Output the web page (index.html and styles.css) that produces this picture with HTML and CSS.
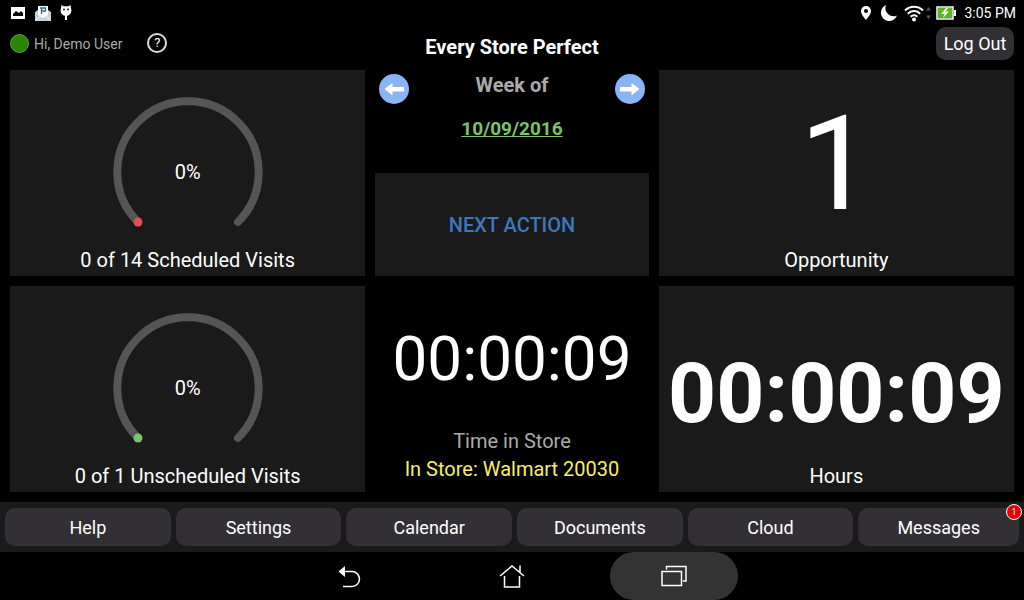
FILE: index.html
```html
<!DOCTYPE html>
<html lang="en">

<head>
  <meta charset="UTF-8">
  <meta name="viewport" content="width=device-width, initial-scale=1">
  <title>Every Store Perfect</title>
  <link rel="stylesheet" href="styles.css">
</head>

<body>
  <div class="status">
    <div class="status-group notices">
      <svg width="16" height="14" viewBox="0 0 16 14"><path fill="#fff" fill-rule="evenodd" d="M1 1h14v12H1zM3 10h10V7l-2-2-2 2-3-2-3 3z"/></svg>
      <svg width="16" height="16" viewBox="0 0 16 16"><path fill="#c9d2d6" d="M0 7l3-2h10l3 2v9H0z"/><path fill="#fff" d="M3 1h10v9l-5 3-5-3z"/><path d="M6.500 9V3h4v3h-4M5 3h3" fill="none" stroke="#356c8e" stroke-width="1.300"/><path d="M0 15l6-4h4l6 4" fill="none" stroke="#f4f7f8"/></svg>
      <svg width="12" height="16" viewBox="0 0 12 16"><path fill="#fff" d="M1.500 0l2 1.300h5L10.500 0l.6 3.500c1 4-1 6.800-4.100 7.200V15H5v-4.300C1.900 10.300-.1 7.500.9 3.500z"/><circle cx="4" cy="4.500" r=".9"/><circle cx="8" cy="4.500" r=".9"/></svg>
    </div>
    <div class="status-group">
      <svg width="12" height="16" viewBox="0 0 12 16"><path fill="#fff" fill-rule="evenodd" d="M6 1a5 5 0 0 0-5 5c0 3.500 5 9 5 9s5-5.500 5-9a5 5 0 0 0-5-5zm0 3a2 2 0 1 1 0 4 2 2 0 0 1 0-4z"/></svg>
      <svg class="moon" width="18" height="16" viewBox="0 0 18 16"><path fill="#fff" d="M6 0a8.300 8.300 0 1 0 11 10.500A8.200 8.200 0 0 1 6 0z"/></svg>
      <svg width="28" height="18" viewBox="0 0 28 18"><g fill="none" stroke="#fff" stroke-width="2"><path d="M1 6.500c5-5 13-5 18 0M3.800 9.700c3.500-3.500 8.900-3.500 12.400 0M6.600 12.800c2-1.900 4.800-1.900 6.800 0"/></g><circle cx="10" cy="15.500" r="2" fill="#fff"/><path fill="#555" d="M22 6.500l2.500-3.500L27 6.500zM22 11.500l2.500 3.500 2.500-3.500z"/></svg>
      <svg class="battery" width="20" height="14" viewBox="0 0 20 14"><path d="M1 1h16v12H1z" fill="#222" stroke="#fff" stroke-width="1.500"/><path fill="#58b51c" d="M2 2h14v10H2z"/><path fill="#fff" d="M18 4h2v6h-2zM10 2L5 8h3.500L7 12l6-6.500H9.500L12 2z"/></svg>
      <span class="clock">3:05 PM</span>
    </div>
  </div>

  <header class="header">
    <div class="user">
      <span class="online"></span>
      <span class="user-name">Hi, Demo User</span>
      <button class="help" aria-label="About">?</button>
    </div>
    <h1>Every Store Perfect</h1>
    <button class="logout">Log Out</button>
  </header>

  <main class="board">
    <section class="tile">
      <div class="gauge">
        <svg width="150" height="140" viewBox="0 0 150 140"><path class="track" d="M25 124a70.700 70.700 0 1 1 100 0"/><circle cx="25" cy="124" r="4.500" fill="#e2504f"/></svg>
        <span class="percent">0%</span>
      </div>
      <div class="label">0 of 14 Scheduled Visits</div>
    </section>

    <section class="center">
      <div class="week">
        <button class="arrow" aria-label="Previous week">
          <svg width="30" height="30" viewBox="0 0 30 30"><circle cx="15" cy="15" r="15" fill="#8ab4f3"/><path fill="#fff" d="M5.500 15l8-6v4H25v4.500H13.500v4z"/></svg>
        </button>
        <div class="week-text">
          <div>Week of</div>
          <a href="#">10/09/2016</a>
        </div>
        <button class="arrow" aria-label="Next week">
          <svg width="30" height="30" viewBox="0 0 30 30"><circle cx="15" cy="15" r="15" fill="#8ab4f3"/><path fill="#fff" d="M24.500 15l-8-6v4H5v4.500h11.500v4z"/></svg>
        </button>
      </div>
      <button class="next">NEXT ACTION</button>
    </section>

    <section class="tile">
      <div class="count">1</div>
      <div class="label">Opportunity</div>
    </section>

    <section class="tile">
      <div class="gauge">
        <svg width="150" height="140" viewBox="0 0 150 140"><path class="track" d="M25 124a70.700 70.700 0 1 1 100 0"/><circle cx="25" cy="124" r="4.500" fill="#7cc36c"/></svg>
        <span class="percent">0%</span>
      </div>
      <div class="label">0 of 1 Unscheduled Visits</div>
    </section>

    <section class="store">
      <div class="timer">00:00:09</div>
      <div class="store-label">Time in Store</div>
      <div class="store-name">In Store: Walmart 20030</div>
    </section>

    <section class="tile">
      <div class="hours">00:00:09</div>
      <div class="label">Hours</div>
    </section>
  </main>

  <nav class="tabs">
    <button>Help</button>
    <button>Settings</button>
    <button>Calendar</button>
    <button>Documents</button>
    <button>Cloud</button>
    <button>Messages<span class="badge">1</span></button>
  </nav>

  <div class="system">
    <button aria-label="Back">
      <svg width="26" height="26" viewBox="0 0 26 26"><path d="M5 8.500h10a7.500 7.500 0 0 1 0 15H6" fill="none" stroke="#fff" stroke-width="1.500"/><path fill="#fff" d="M1.500 8.500L8 3v11z"/></svg>
    </button>
    <button aria-label="Home">
      <svg width="26" height="26" viewBox="0 0 26 26"><path d="M1 13L13 3l12 10M21 9V2.500M5.500 13v11h15V13" fill="none" stroke="#fff" stroke-width="1.500"/></svg>
    </button>
    <button class="pressed" aria-label="Recent apps">
      <svg width="26" height="26" viewBox="0 0 26 26"><path d="M1 8.500h19.500v14H1zM5.500 6.500v-3h19.500v14.500h-3" fill="none" stroke="#fff" stroke-width="1.500"/></svg>
    </button>
  </div>
</body>

</html>
```
FILE: styles.css
```css
* {
  box-sizing: border-box;
}

body {
  margin: 0;
  min-height: 100vh;
  display: flex;
  flex-direction: column;
  background: #000;
  color: #fff;
  font-family: Roboto, "Liberation Sans", sans-serif;
  font-size: 20px;
}

button {
  margin: 0;
  padding: 0;
  border: none;
  background: none;
  color: inherit;
  font: inherit;
  cursor: pointer;
}

svg {
  display: block;
  overflow: visible;
}

/* android status bar */
.status {
  height: 25px;
  padding: 0 8px 0 10px;
  display: flex;
  justify-content: space-between;
}

.status-group {
  display: flex;
  align-items: center;
  gap: 8px;
}

.notices {
  gap: 9px;
}

.moon {
  margin-right: -2px;
}

.battery {
  margin-left: -4px;
}

.clock {
  font-size: 14px;
}

/* header */
.header {
  height: 45px;
  padding: 2px 10px 0;
  display: grid;
  grid-template-columns: 1fr auto 1fr;
  align-items: start;
}

.user {
  height: 32px;
  display: flex;
  align-items: center;
}

.online {
  width: 19px;
  height: 19px;
  border-radius: 50%;
  border: 1px solid #5d9e4c;
  background: #2a8500;
}

.user-name {
  margin: 2px 25px 0 5px;
  color: #aaa;
  font-size: 14px;
}

.help {
  width: 20px;
  height: 20px;
  border: 2px solid #ddd;
  border-radius: 50%;
  font-size: 13px;
  line-height: 16px;
}

h1 {
  margin: 0;
  font-size: 20px;
  line-height: 40px;
}

.logout {
  justify-self: end;
  width: 78px;
  height: 33px;
  border-radius: 10px;
  background: #323034;
  font-size: 18px;
}

/* dashboard */
.board {
  flex: 1;
  padding: 0 10px 10px;
  display: grid;
  grid-template-columns: 13fr 10fr 13fr;
  grid-template-rows: 1fr 1fr;
  gap: 10px;
}

.tile {
  display: flex;
  flex-direction: column;
  background: #1a1a1a;
  text-align: center;
}

.label {
  line-height: 32px;
}

.gauge {
  flex: 1;
  padding-top: 28px;
  display: grid;
  justify-items: center;
  align-items: start;
}

.gauge svg,
.percent {
  grid-area: 1 / 1;
}

.percent {
  padding-top: 60px;
  line-height: 28px;
}

.track {
  fill: none;
  stroke: #555;
  stroke-width: 8;
  stroke-linecap: round;
}

.count,
.hours {
  flex: 1;
}

.count {
  padding-top: 18px;
  font-size: 131px;
  line-height: 152px;
}

.hours {
  padding-top: 58px;
  font-size: 84px;
  font-weight: bold;
  line-height: 100px;
}

.center {
  display: grid;
  grid-template-rows: 1fr 1fr;
}

.week {
  padding: 0 4px;
  display: flex;
  justify-content: space-between;
  color: #aaa;
  font-weight: bold;
  line-height: 30px;
  text-align: center;
}

.arrow {
  height: 30px;
  margin-top: 4px;
}

.week-text {
  display: flex;
  flex-direction: column;
  gap: 14px;
}

.week a {
  color: #7cc36c;
  font-size: 19px;
}

.next {
  background: #1a1a1a;
  color: #3b78bf;
  font-weight: 500;
}

.store {
  display: flex;
  flex-direction: column;
  line-height: 28px;
  text-align: center;
}

.timer {
  flex: 1;
  padding-top: 37px;
  font-size: 62px;
  line-height: 72px;
}

.store-label {
  color: #aaa;
}

.store-name {
  padding-bottom: 9px;
  color: #f6ee6e;
}

/* bottom tabs */
.tabs {
  height: 50px;
  display: grid;
  grid-template-columns: repeat(6, 1fr);
  align-items: center;
  background: #1a1a1a;
}

.tabs button {
  position: relative;
  height: 38px;
  margin-left: 5px;
  border-radius: 10px;
  background: #323034;
  font-size: 18px;
}

.tabs button:last-child {
  margin-right: 5px;
}

.badge {
  position: absolute;
  top: -4px;
  right: -3px;
  width: 16px;
  height: 16px;
  border: 1px solid #fff;
  border-radius: 50%;
  background: #e80000;
  font-size: 9px;
  line-height: 14px;
}

/* android navigation bar */
.system {
  height: 48px;
  display: flex;
  justify-content: center;
  gap: 34px;
}

.system button {
  width: 128px;
  display: flex;
  justify-content: center;
  align-items: center;
}

.pressed {
  border-radius: 24px;
  background: #333;
}
```
